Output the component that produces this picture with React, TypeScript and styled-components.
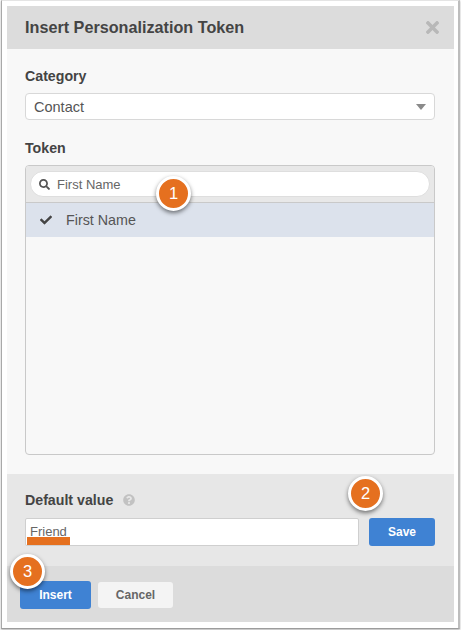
import styled, { createGlobalStyle } from 'styled-components';
import { FaCheck, FaSearch, FaTimes, FaQuestionCircle } from 'react-icons/fa';

const GlobalStyle = createGlobalStyle`
  html, body {
    margin: 0;
    padding: 0;
    background: #fff;
    font-family: 'Liberation Sans', Arial, sans-serif;
  }
`;

export default function App() {
  return (
    <>
      <GlobalStyle />
      <Page>
        <Frame>
          <Modal>
            <Header>
              <Title>Insert Personalization Token</Title>
              <CloseIcon>
                <FaTimes />
              </CloseIcon>
            </Header>

            <Body>
              <Label>Category</Label>
              <Select>
                Contact
                <Caret />
              </Select>

              <TokenLabel>Token</TokenLabel>
              <ListBox>
                <SearchArea>
                  <SearchBar>
                    <FaSearch />
                    First Name
                  </SearchBar>
                  <Badge $left={130} $top={10}>1</Badge>
                </SearchArea>
                <TokenRow>
                  <FaCheck />
                  First Name
                </TokenRow>
              </ListBox>
            </Body>

            <DefaultSection>
              <DefaultLabel>
                Default value
                <HelpIcon>
                  <FaQuestionCircle />
                </HelpIcon>
              </DefaultLabel>
              <ValueRow>
                <ValueInput>
                  Friend
                  <Underline />
                </ValueInput>
                <Button $primary $width={66} $height={28}>Save</Button>
              </ValueRow>
              <Badge $left={341} $top={2}>2</Badge>
            </DefaultSection>

            <Footer>
              <Button $primary $width={71} $height={28}>Insert</Button>
              <Button $width={75} $height={26}>Cancel</Button>
              <Badge $left={3} $top={-12}>3</Badge>
            </Footer>
          </Modal>
        </Frame>
      </Page>
    </>
  );
}

const Page = styled.div`
  width: 461px;
  height: 630px;
  padding: 0 1px 1px 1px;
  box-sizing: border-box;
  overflow: hidden;
`;

const Frame = styled.div`
  width: 100%;
  height: 100%;
  box-sizing: border-box;
  padding: 5px 0 0 5px;
  background: #fff;
  border-left: 1px solid #a9a9a9;
  border-right: 2px solid #bdbdbd;
  border-top: 1px solid #e4e4e4;
  border-bottom: 1px solid #9c9c9c;
  box-shadow: 0 1px 2px rgba(0, 0, 0, 0.3);
`;

const Modal = styled.div`
  width: 447px;
  height: 616px;
  display: flex;
  flex-direction: column;
  color: #444;
`;

const Header = styled.div`
  height: 43px;
  flex: none;
  box-sizing: border-box;
  background: #dcdcdc;
  display: flex;
  align-items: center;
  justify-content: space-between;
  padding: 0 12px 1px 18px;
`;

const Title = styled.h1`
  margin: 0;
  font-size: 16.2px;
  font-weight: 700;
  color: #444;
`;

const CloseIcon = styled.span`
  display: flex;
  color: #b8b8b8;
  font-size: 19px;
`;

const Body = styled.div`
  height: 425px;
  flex: none;
  box-sizing: border-box;
  background: #f8f8f8;
  padding: 18px 19px 0 18px;
  display: flex;
  flex-direction: column;
`;

const Label = styled.div`
  font-size: 14.2px;
  line-height: 18px;
  font-weight: 700;
  color: #444;
  margin-bottom: 8px;
`;

const TokenLabel = styled(Label)`
  margin: 19px 0 8px;
`;

const Select = styled.div`
  height: 27px;
  box-sizing: border-box;
  background: #fff;
  border: 1px solid #d8d8d8;
  border-radius: 4px;
  display: flex;
  align-items: center;
  justify-content: space-between;
  padding: 0 8px;
  font-size: 14.5px;
  color: #555;
`;

const Caret = styled.span`
  width: 0;
  height: 0;
  border-left: 5px solid transparent;
  border-right: 5px solid transparent;
  border-top: 6px solid #8a8a8a;
`;

const ListBox = styled.div`
  height: 290px;
  box-sizing: border-box;
  border: 1px solid #c9c9c9;
  border-radius: 4px;
  background: #f8f8f8;
  overflow: hidden;
`;

const SearchArea = styled.div`
  position: relative;
  height: 37px;
  box-sizing: border-box;
  background: #e8e8e8;
  border-bottom: 1px solid #c9c9c9;
  padding: 5px 4px 0 4px;
`;

const SearchBar = styled.div`
  height: 26px;
  box-sizing: border-box;
  background: #fff;
  border: 1px solid #dedede;
  border-radius: 13px;
  display: flex;
  align-items: center;
  gap: 7px;
  padding: 0 8px;
  font-size: 13px;
  color: #666;

  svg {
    font-size: 11px;
    color: #555;
  }
`;

const TokenRow = styled.div`
  height: 34px;
  background: #dce2ec;
  display: flex;
  align-items: center;
  gap: 14px;
  padding: 0 14px;
  font-size: 14.3px;
  color: #555;

  svg {
    font-size: 12px;
    color: #444;
  }
`;

const DefaultSection = styled.div`
  position: relative;
  height: 92px;
  flex: none;
  box-sizing: border-box;
  background: #e7e7e7;
  padding: 17px 19px 0 18px;
`;

const DefaultLabel = styled.div`
  display: flex;
  align-items: center;
  gap: 10px;
  font-size: 14.2px;
  line-height: 18px;
  font-weight: 700;
  color: #444;
  margin-bottom: 9px;
`;

const HelpIcon = styled.span`
  display: flex;
  color: #c2c2c2;
  font-size: 12px;
`;

const ValueRow = styled.div`
  display: flex;
  gap: 10px;
  align-items: flex-start;
`;

const ValueInput = styled.div`
  position: relative;
  width: 334px;
  height: 28px;
  box-sizing: border-box;
  background: #fff;
  border: 1px solid #cfcfcf;
  border-radius: 2px;
  padding: 5px 4px;
  font-size: 13px;
  line-height: 16px;
  color: #666;
`;

const Underline = styled.span`
  position: absolute;
  left: 1px;
  bottom: 0;
  width: 43px;
  height: 8px;
  background: #e5701f;
`;

const Button = styled.div<{ $primary?: boolean; $width: number; $height: number }>`
  width: ${({ $width }) => $width}px;
  height: ${({ $height }) => $height}px;
  flex: none;
  display: flex;
  align-items: center;
  justify-content: center;
  border-radius: 3px;
  font-size: 12px;
  font-weight: 700;
  background: ${({ $primary }) => ($primary ? '#3f82d3' : '#f4f4f4')};
  color: ${({ $primary }) => ($primary ? '#fff' : '#666')};
`;

const Footer = styled.div`
  position: relative;
  height: 56px;
  flex: none;
  box-sizing: border-box;
  background: #dcdcdc;
  padding: 2px 0 0 13px;
  display: flex;
  align-items: center;
  gap: 7px;
`;

const Badge = styled.span<{ $left: number; $top: number }>`
  position: absolute;
  left: ${({ $left }) => $left}px;
  top: ${({ $top }) => $top}px;
  width: 29px;
  height: 29px;
  box-sizing: content-box;
  border: 3px solid #fff;
  border-radius: 50%;
  background: #e5701f;
  color: #fff;
  font-size: 16.5px;
  display: flex;
  align-items: center;
  justify-content: center;
  box-shadow: 0 2px 4px rgba(0, 0, 0, 0.5);
  z-index: 2;
`;
